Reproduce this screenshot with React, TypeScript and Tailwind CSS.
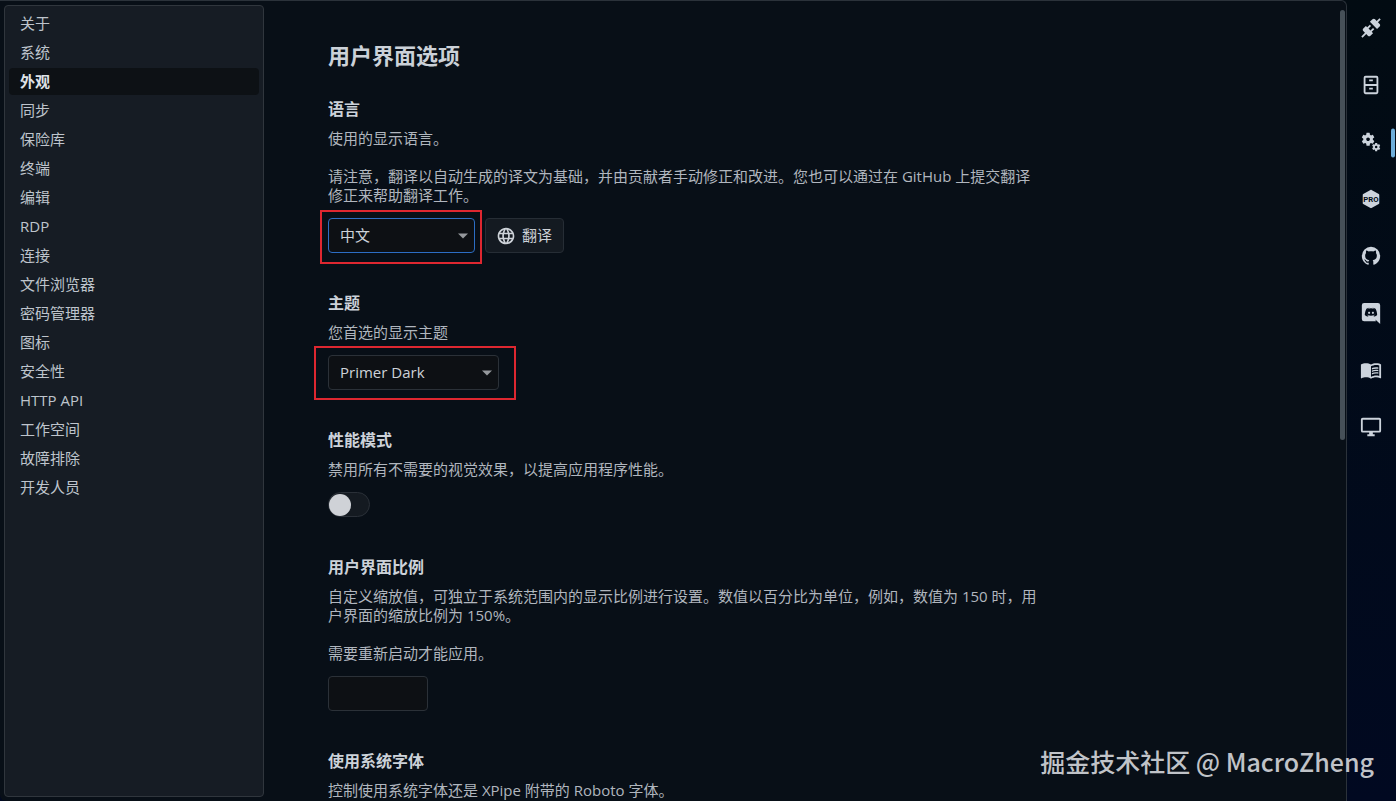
import React, { useState } from 'react'
import { MdLanguage, MdMenuBook, MdMiscellaneousServices } from 'react-icons/md'

const categories = [
  '关于',
  '系统',
  '外观',
  '同步',
  '保险库',
  '终端',
  '编辑',
  'RDP',
  '连接',
  '文件浏览器',
  '密码管理器',
  '图标',
  '安全性',
  'HTTP API',
  '工作空间',
  '故障排除',
  '开发人员',
]

interface PathIconProps {
  d: string
}

const PathIcon = ({ d }: PathIconProps) => (
  <svg viewBox="0 0 24 24" className="size-[22px]" fill="currentColor" fillRule="evenodd" aria-hidden="true">
    <path d={d} />
  </svg>
)

const ProIcon = () => (
  <svg viewBox="0 0 24 24" className="size-[22px]" aria-hidden="true">
    <path
      fill="currentColor"
      d="M21 16.5c0 .38-.21.71-.53.88l-7.9 4.44c-.16.12-.36.18-.57.18s-.41-.06-.57-.18l-7.9-4.44A.99.99 0 0 1 3 16.5v-9c0-.38.21-.71.53-.88l7.9-4.44c.16-.12.36-.18.57-.18s.41.06.57.18l7.9 4.44c.32.17.53.5.53.88v9Z"
    />
    <text
      x="12"
      y="15"
      textAnchor="middle"
      fill="#020b16"
      className="font-['Roboto',sans-serif] text-[8.5px] font-bold"
    >
      PRO
    </text>
  </svg>
)

const railItems = [
  {
    label: '连接',
    icon: (
      <PathIcon d="M21.4 7.5C22.2 8.3 22.2 9.6 21.4 10.3L18.6 13.1L10.8 5.3L13.6 2.5C14.4 1.7 15.7 1.7 16.4 2.5L18.2 4.3L21.2 1.3L22.6 2.7L19.6 5.7L21.4 7.5M15.6 13.3L14.2 11.9L11.4 14.7L9.3 12.6L12.1 9.8L10.7 8.4L7.9 11.2L6.4 9.8L3.6 12.6C2.8 13.4 2.8 14.7 3.6 15.4L5.4 17.2L1.4 21.2L2.8 22.6L6.8 18.6L8.6 20.4C9.4 21.2 10.7 21.2 11.4 20.4L14.2 17.6L12.8 16.2L15.6 13.3Z" />
    ),
  },
  {
    label: '文件浏览器',
    icon: (
      <PathIcon d="M14 8H10V6H14V8M20 4V20A2 2 0 0 1 18 22H6A2 2 0 0 1 4 20V4A2 2 0 0 1 6 2H18A2 2 0 0 1 20 4M18 13H6V20H18V13M18 4H6V11H18V4M14 15H10V17H14V15Z" />
    ),
  },
  { label: '设置', icon: <MdMiscellaneousServices size={22} /> },
  { label: '许可证', icon: <ProIcon /> },
  {
    label: 'GitHub',
    icon: (
      <PathIcon d="M12,2A10,10 0 0,0 2,12C2,16.42 4.87,20.17 8.84,21.5C9.34,21.58 9.5,21.27 9.5,21C9.5,20.77 9.5,20.14 9.5,19.31C6.73,19.91 6.14,17.97 6.14,17.97C5.68,16.81 5.03,16.5 5.03,16.5C4.12,15.88 5.1,15.9 5.1,15.9C6.1,15.97 6.63,16.93 6.63,16.93C7.5,18.45 8.97,18 9.54,17.76C9.63,17.11 9.89,16.67 10.17,16.42C7.95,16.17 5.62,15.31 5.62,11.5C5.62,10.39 6,9.5 6.65,8.79C6.55,8.54 6.2,7.5 6.75,6.15C6.75,6.15 7.59,5.88 9.5,7.17C10.29,6.95 11.15,6.84 12,6.84C12.85,6.84 13.71,6.95 14.5,7.17C16.41,5.88 17.25,6.15 17.25,6.15C17.8,7.5 17.45,8.54 17.35,8.79C18,9.5 18.38,10.39 18.38,11.5C18.38,15.32 16.04,16.16 13.81,16.41C14.17,16.72 14.5,17.33 14.5,18.26C14.5,19.6 14.5,20.68 14.5,21C14.5,21.27 14.66,21.59 15.17,21.5C19.14,20.16 22,16.42 22,12A10,10 0 0,0 12,2Z" />
    ),
  },
  {
    label: 'Discord',
    icon: (
      <PathIcon d="M22,24L16.75,19L17.38,21H4.5A2.5,2.5 0 0,1 2,18.5V3.5A2.5,2.5 0 0,1 4.5,1H19.5A2.5,2.5 0 0,1 22,3.5V24M12,6.8C9.32,6.8 7.44,7.95 7.44,7.95C8.47,7.03 10.27,6.5 10.27,6.5L10.1,6.33C8.41,6.36 6.88,7.53 6.88,7.53C5.16,11.12 5.27,14.22 5.27,14.22C6.67,16.03 8.75,15.9 8.75,15.9L9.46,15C8.21,14.73 7.42,13.62 7.42,13.62C7.42,13.62 9.3,14.9 12,14.9C14.7,14.9 16.58,13.62 16.58,13.62C16.58,13.62 15.79,14.73 14.54,15L15.25,15.9C15.25,15.9 17.33,16.03 18.73,14.22C18.73,14.22 18.84,11.12 17.12,7.53C17.12,7.53 15.59,6.36 13.9,6.33L13.73,6.5C13.73,6.5 15.53,7.03 16.56,7.95C16.56,7.95 14.68,6.8 12,6.8M9.93,10.59C10.58,10.59 11.11,11.16 11.1,11.86C11.1,12.55 10.58,13.13 9.93,13.13C9.29,13.13 8.77,12.55 8.77,11.86C8.77,11.16 9.28,10.59 9.93,10.59M14.1,10.59C14.75,10.59 15.27,11.16 15.27,11.86C15.27,12.55 14.75,13.13 14.1,13.13C13.46,13.13 12.94,12.55 12.94,11.86C12.94,11.16 13.45,10.59 14.1,10.59Z" />
    ),
  },
  { label: '文档', icon: <MdMenuBook size={22} /> },
  {
    label: '桌面',
    icon: (
      <PathIcon d="M21,16H3V4H21M21,2H3C1.89,2 1,2.89 1,4V16A2,2 0 0,0 3,18H10V20H8V22H16V20H14V18H21A2,2 0 0,0 23,16V4C23,2.89 22.1,2 21,2Z" />
    ),
  },
]

interface OptionProps {
  title: string
  htmlFor: string
  description: string[]
  children?: React.ReactNode
}

const Option = ({ title, htmlFor, description, children }: OptionProps) => (
  <section className="mb-[38px]">
    <h2 className="mb-2 text-base leading-6 font-bold text-[#ccd2d9]">
      <label htmlFor={htmlFor}>{title}</label>
    </h2>
    <div className="mb-[13px] flex flex-col gap-[19px] leading-[19px] text-[#b0b6be]">
      {description.map((text) => (
        <p key={text}>{text}</p>
      ))}
    </div>
    {children}
  </section>
)

interface ComboProps {
  id: string
  options: string[]
  className: string
}

const Combo = ({ id, options, className }: ComboProps) => (
  <>
    <select
      id={id}
      className={`h-[35px] appearance-none rounded border bg-[#0d1014] pr-8 pl-[11px] text-[#cdd2d8] outline-none ${className}`}
    >
      {options.map((option) => (
        <option key={option}>{option}</option>
      ))}
    </select>
    <svg
      viewBox="0 0 10 6"
      className="pointer-events-none absolute top-1/2 right-[7px] h-[6px] w-[10px] -translate-y-1/2"
      aria-hidden="true"
    >
      <path d="M0 0.5H10L5 5.5Z" fill="#95989d" />
    </svg>
  </>
)

const App = () => {
  const [selected, setSelected] = useState('外观')
  const [performance, setPerformance] = useState(false)
  const [scale, setScale] = useState('')

  return (
    <div className="relative flex h-screen overflow-hidden bg-linear-to-b from-[#020b12] to-[#010921] font-['Open_Sans','Noto_Sans_CJK_SC',sans-serif] text-[15px] text-[#bec4cc]">
      <main className="flex min-w-0 flex-1 overflow-hidden rounded-tr-md rounded-bl-md border-t border-r border-[#2b323a] bg-[#080f17]">
        <nav className="my-1 ml-1 flex w-[260px] shrink-0 flex-col gap-0.5 rounded border border-[#30363d] bg-[#161c24] p-1">
          {categories.map((category) => (
            <button
              key={category}
              type="button"
              onClick={() => setSelected(category)}
              className={`flex h-[27px] shrink-0 items-center rounded px-[11px] text-left ${
                category === selected ? 'bg-[#0d1115] font-bold text-[#dfe3e8]' : ''
              }`}
            >
              {category}
            </button>
          ))}
        </nav>

        <div className="min-w-0 flex-1 overflow-hidden pt-10 pl-16">
          <div className="max-w-[716px]">
            <h1 className="mb-7 text-[22px] leading-7 font-bold text-[#cbd1d8]">用户界面选项</h1>

            <Option
              title="语言"
              htmlFor="language"
              description={[
                '使用的显示语言。',
                '请注意，翻译以自动生成的译文为基础，并由贡献者手动修正和改进。您也可以通过在 GitHub 上提交翻译修正来帮助翻译工作。',
              ]}
            >
              <div className="flex gap-2.5">
                <div className="relative flex">
                  <Combo id="language" options={['中文', 'English']} className="w-[147px] border-[#2c6dc4]" />
                  <div className="pointer-events-none absolute -top-2 -right-[7px] -bottom-[11px] -left-2 border-2 border-[#de2730]" />
                </div>
                <button
                  type="button"
                  className="flex h-[35px] items-center gap-1.5 rounded border border-[#262d35] bg-[#141a21] pr-[11px] pl-2.5 text-[#cdd2d8]"
                >
                  <MdLanguage size={20} />
                  翻译
                </button>
              </div>
            </Option>

            <Option title="主题" htmlFor="theme" description={['您首选的显示主题']}>
              <div className="flex">
                <div className="relative flex">
                  <Combo id="theme" options={['Primer Dark', 'Primer Light']} className="w-[171px] border-[#2b3138]" />
                  <div className="pointer-events-none absolute -top-[9px] -right-[17px] -bottom-2.5 -left-3.5 border-2 border-[#de2730]" />
                </div>
              </div>
            </Option>

            <Option
              title="性能模式"
              htmlFor="performance"
              description={['禁用所有不需要的视觉效果，以提高应用程序性能。']}
            >
              <input
                id="performance"
                type="checkbox"
                role="switch"
                checked={performance}
                onChange={(e) => setPerformance(e.target.checked)}
                className="flex h-[25px] w-[42px] appearance-none items-center rounded-full border border-[#2a3038] bg-[#141a21] before:size-[22px] before:rounded-full before:bg-[#cfd2d7] checked:justify-end"
              />
            </Option>

            <Option
              title="用户界面比例"
              htmlFor="scale"
              description={[
                '自定义缩放值，可独立于系统范围内的显示比例进行设置。数值以百分比为单位，例如，数值为 150 时，用户界面的缩放比例为 150%。',
                '需要重新启动才能应用。',
              ]}
            >
              <input
                id="scale"
                type="text"
                value={scale}
                onChange={(e) => setScale(e.target.value)}
                className="block h-[35px] w-[100px] rounded border border-[#2b3138] bg-[#0d1014] px-[11px] outline-none"
              />
            </Option>

            <Option
              title="使用系统字体"
              htmlFor="system-font"
              description={['控制使用系统字体还是 XPipe 附带的 Roboto 字体。']}
            >
              <input id="system-font" type="checkbox" role="switch" className="h-[25px] w-[42px] appearance-none" />
            </Option>
          </div>
        </div>

        <div className="w-1.5 shrink-0 pt-[9px]">
          <div className="h-[54.3%] w-[5px] rounded-full bg-[#465058]" />
        </div>
      </main>

      <aside className="flex w-[49px] shrink-0 flex-col text-[#ccd3dc]">
        {railItems.map((item) => (
          <button
            key={item.label}
            type="button"
            aria-label={item.label}
            className="relative flex h-[57px] shrink-0 items-center justify-center pr-px pb-0.5"
          >
            {item.icon}
            {item.label === '设置' && (
              <span className="absolute top-1/2 right-px h-[29px] w-1 -translate-y-1/2 rounded-sm bg-[#6eaeda]" />
            )}
          </button>
        ))}
      </aside>

      <div className="pointer-events-none absolute right-[22px] bottom-[22px] font-['Noto_Sans_CJK_SC',sans-serif] text-[25px] leading-9 font-medium text-[#c0c3c8]">
        掘金技术社区 @ MacroZheng
      </div>
    </div>
  )
}

export default App
